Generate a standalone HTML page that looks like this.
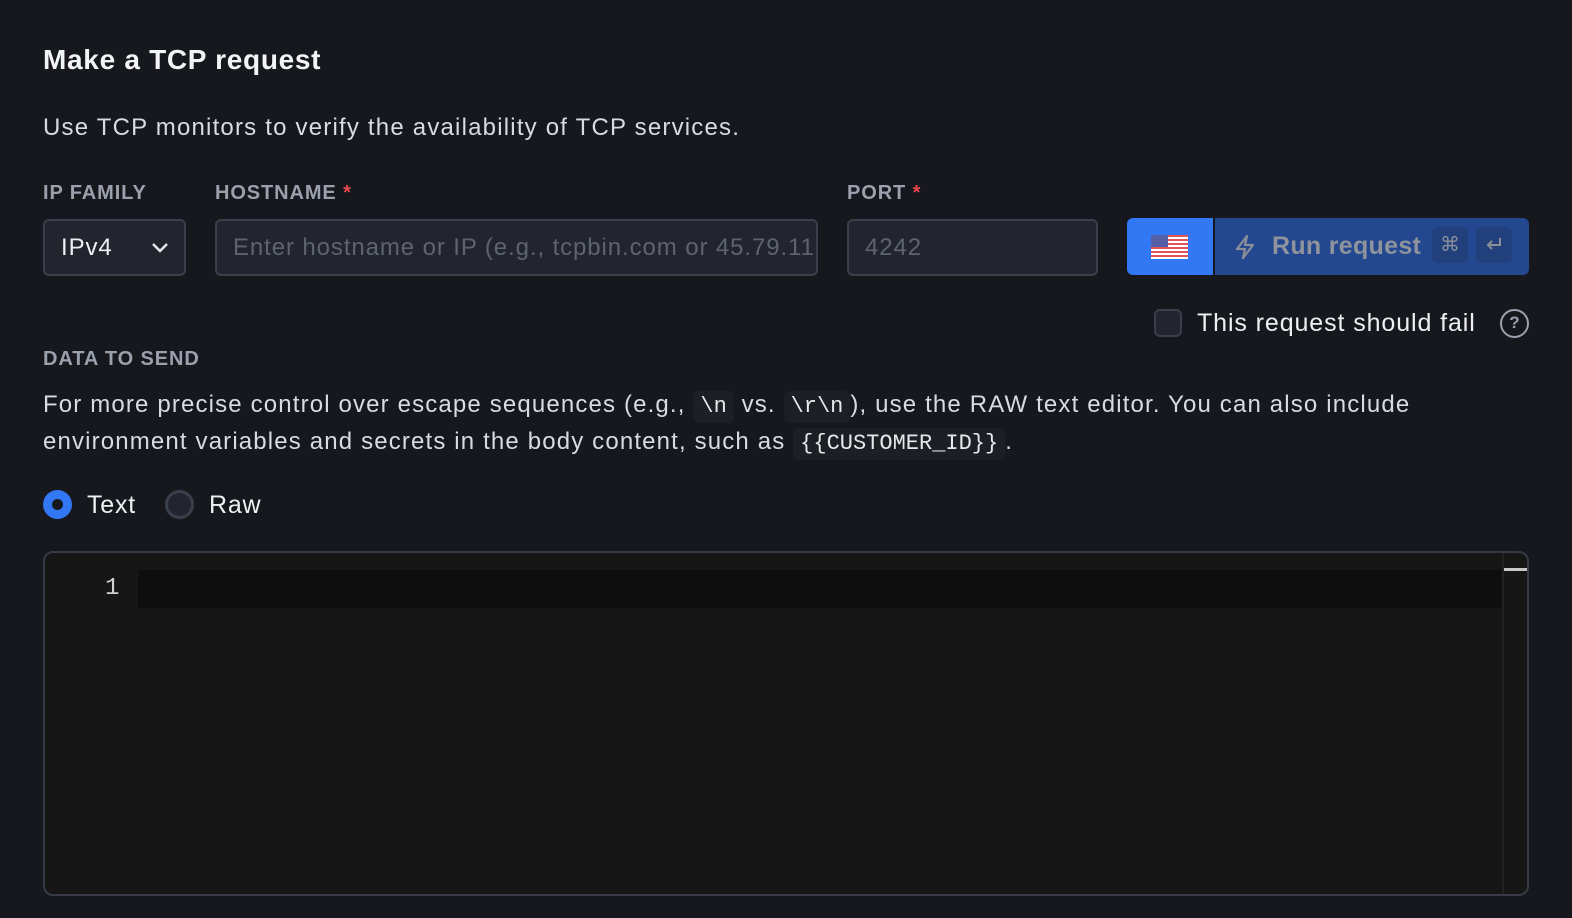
<!DOCTYPE html>
<html><head><style>
*{box-sizing:border-box;margin:0;padding:0}
body{width:1572px;height:918px;background:#17181e;font-family:"Liberation Sans",sans-serif;color:#e6e8ec;position:relative;overflow:hidden}
.a{position:absolute;white-space:nowrap}
.lbl{font-size:20px;font-weight:bold;color:#9aa1ad;letter-spacing:0.9px}
.star{color:#e5484d}
.inp{position:absolute;background:#22252d;border:2px solid #3a404b;border-radius:6px;font-size:24px;color:#5d6370;padding-left:16px;line-height:54px;overflow:hidden;white-space:nowrap;letter-spacing:0.9px}
code{font-family:"Liberation Mono",monospace;background:#1d1f25;border-radius:6px;padding:0 7px;font-size:22px;color:#e6e8ec;letter-spacing:0;display:inline-block;line-height:32px}
</style></head><body>
<div class="a" style="left:43px;top:44px;font-size:28px;font-weight:bold;color:#f3f4f6;letter-spacing:0.7px">Make a TCP request</div>
<div class="a" style="left:43px;top:114px;font-size:24px;color:#d8dbe0;letter-spacing:1.2px">Use TCP monitors to verify the availability of TCP services.</div>
<div class="a lbl" style="left:43px;top:182px">IP FAMILY</div>
<div class="a lbl" style="left:215px;top:182px">HOSTNAME <span class="star">*</span></div>
<div class="a lbl" style="left:847px;top:182px">PORT <span class="star">*</span></div>
<div class="inp" style="left:43px;top:219px;width:143px;height:57px;color:#eef0f3">IPv4
<svg style="position:absolute;right:14px;top:20px" width="20" height="14" viewBox="0 0 20 14"><path d="M3 3l7 7 7-7" stroke="#e6e8ec" stroke-width="2.5" fill="none"/></svg></div>
<div class="inp" style="left:215px;top:219px;width:603px;height:57px">Enter hostname or IP (e.g., tcpbin.com or 45.79.112.203)</div>
<div class="inp" style="left:847px;top:219px;width:251px;height:57px">4242</div>
<div class="a" style="left:1127px;top:218px;width:86px;height:57px;background:#3277f3;border-radius:6px 0 0 6px">
<svg style="position:absolute;left:24px;top:17px" width="37" height="24" viewBox="0 0 37 24"><rect width="37" height="24" fill="#fff"/><g fill="#e5535a"><rect y="0" width="37" height="2"/><rect y="4" width="37" height="2"/><rect y="8" width="37" height="2"/><rect y="12" width="37" height="2"/><rect y="16" width="37" height="2"/><rect y="20" width="37" height="2"/></g><rect width="17" height="12" fill="#5660a8"/></svg></div>
<div class="a" style="left:1215px;top:218px;width:314px;height:57px;background:#234890;border-radius:0 6px 6px 0">
<svg style="position:absolute;left:18px;top:16px" width="24" height="26" viewBox="0 0 24 26"><path d="M14 2L4 15h8l-2 9 10-13h-8z" stroke="#8a8f99" stroke-width="2.2" fill="none" stroke-linejoin="round"/></svg>
<div class="a" style="left:57px;top:14px;font-size:25px;font-weight:bold;color:#8e939c;letter-spacing:0.3px">Run request</div>
<div class="a" style="left:217px;top:9px;width:36px;height:36px;background:#21407c;border-radius:6px;color:#8a8f99;font-size:20px;text-align:center;line-height:36px">⌘</div>
<div class="a" style="left:261px;top:9px;width:36px;height:36px;background:#21407c;border-radius:6px">
<svg style="position:absolute;left:8px;top:9px" width="20" height="18" viewBox="0 0 20 18"><path d="M16 2v7H4M8 5L4 9l4 4" stroke="#8a8f99" stroke-width="2" fill="none"/></svg></div></div>
<div class="a" style="left:1154px;top:309px;width:28px;height:28px;border:2px solid #3a404b;background:#22252d;border-radius:6px"></div>
<div class="a" style="left:1197px;top:309px;font-size:25px;color:#eef0f3;letter-spacing:0.9px">This request should fail</div>
<div class="a" style="left:1500px;top:309px;width:29px;height:29px;border:2.5px solid #9aa1ad;border-radius:50%;color:#9aa1ad;font-weight:bold;font-size:17px;text-align:center;line-height:24px">?</div>
<div class="a lbl" style="left:43px;top:348px">DATA TO SEND</div>
<div class="a" style="left:43px;top:386px;font-size:24px;color:#d8dbe0;line-height:37px;letter-spacing:1.15px">For more precise control over escape sequences (e.g., <code>\n</code> vs. <code>\r\n</code>), use the RAW text editor. You can also include<br>environment variables and secrets in the body content, such as <code>{{CUSTOMER_ID}}</code>.</div>
<div class="a" style="left:43px;top:490px;width:29px;height:29px;border-radius:50%;background:#3277f3"><div style="position:absolute;left:9px;top:9px;width:11px;height:11px;border-radius:50%;background:#17181e"></div></div>
<div class="a" style="left:87px;top:491px;font-size:25px;color:#eef0f3;letter-spacing:0.8px">Text</div>
<div class="a" style="left:165px;top:490px;width:29px;height:29px;border-radius:50%;border:3px solid #3a404b;background:#22252d"></div>
<div class="a" style="left:209px;top:491px;font-size:25px;color:#eef0f3;letter-spacing:0.8px">Raw</div>
<div class="a" style="left:43px;top:551px;width:1486px;height:345px;background:#161616;border:2px solid #363b45;border-radius:10px;overflow:hidden">
<div class="a" style="left:93px;top:17px;width:1365px;height:38px;background:#0e0e0e"></div>
<div class="a" style="left:60px;top:22px;font-family:'Liberation Mono',monospace;font-size:24px;color:#d0d0d0">1</div>
<div class="a" style="left:1457px;top:0;width:2px;height:345px;background:#222"></div>
<div class="a" style="left:1459px;top:15px;width:24px;height:3px;background:#c8c8c8"></div>
</div>
</body></html>
